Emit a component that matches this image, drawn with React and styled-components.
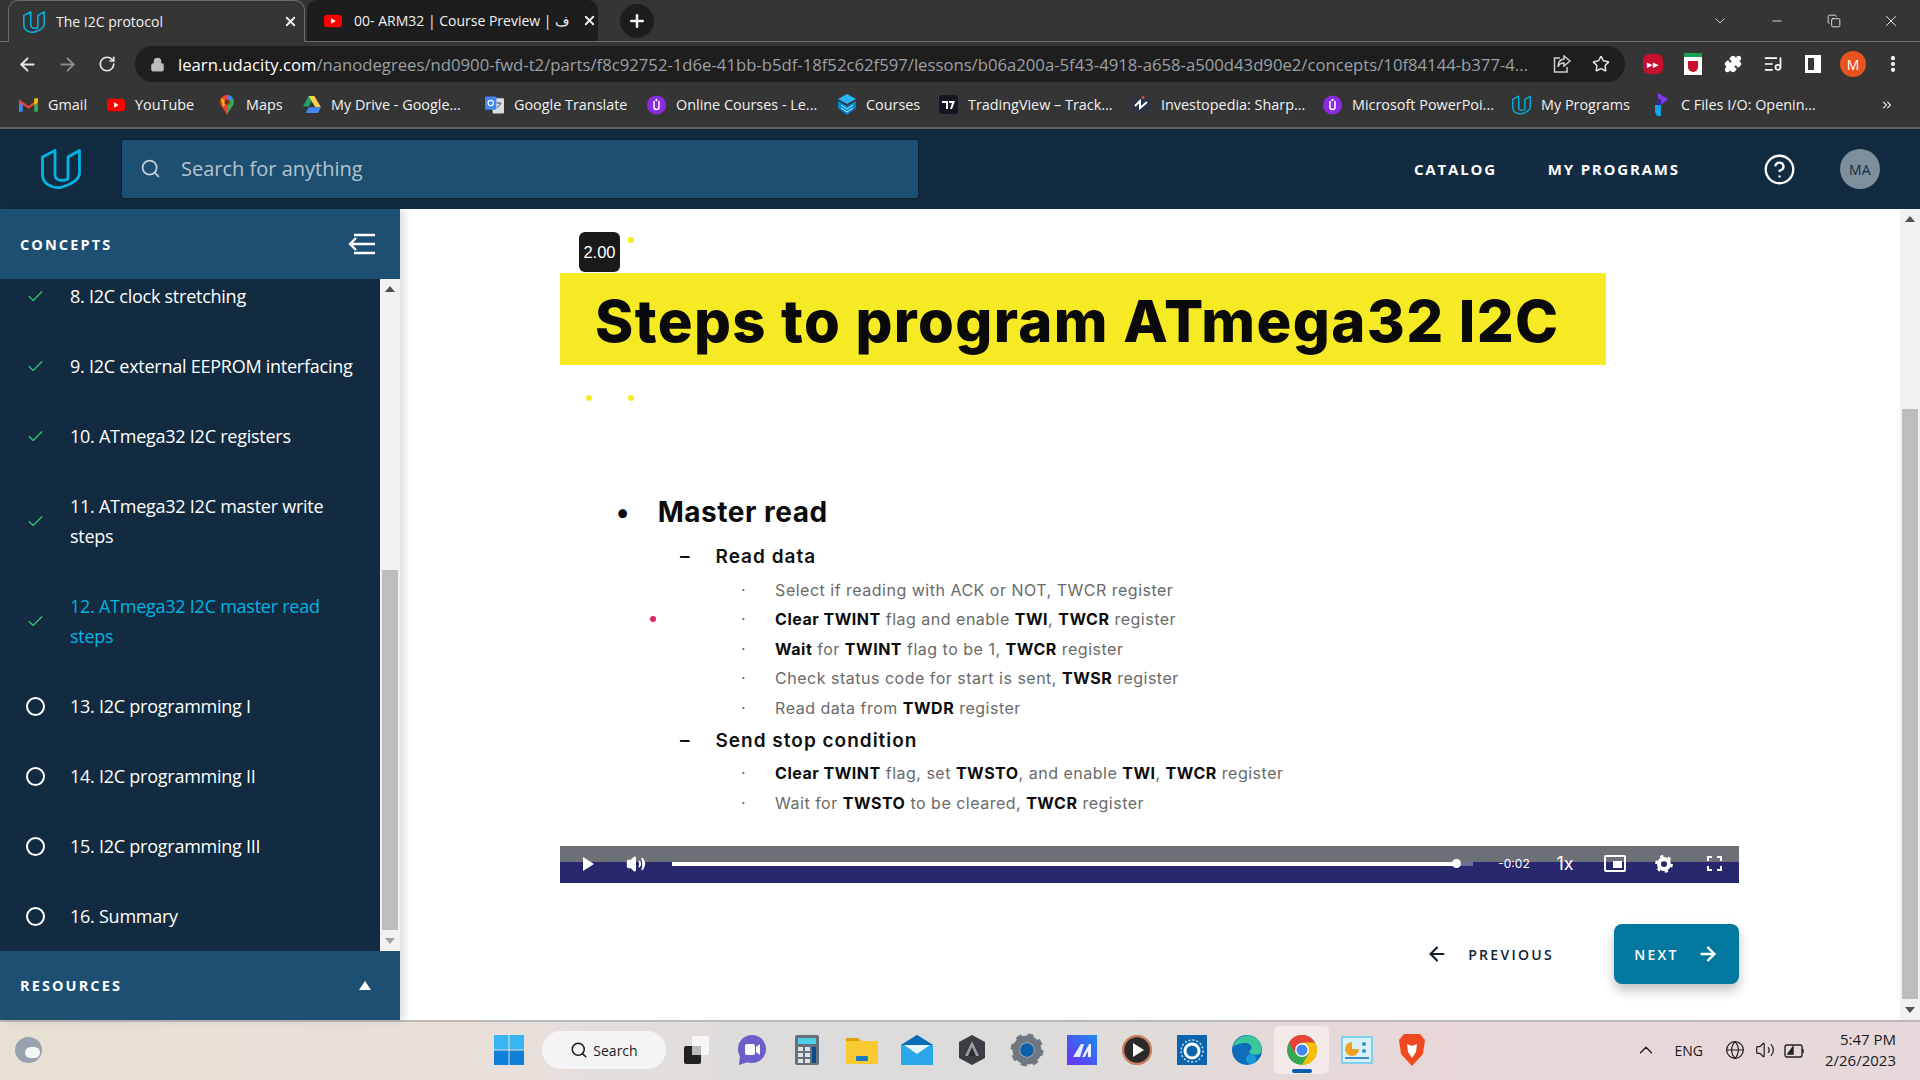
import React from "react";
import styled, { createGlobalStyle } from "styled-components";
import {
  ArrowLeft, ArrowRight, RotateCw, Lock, Star, Puzzle, Search, Check, X, Plus,
  ChevronDown, ChevronUp, Minus, Volume2, CircleHelp, Globe, ListMusic,
  EllipsisVertical, Copy, ChevronsRight,
} from "lucide-react";

const Global = createGlobalStyle`
  html, body { margin: 0; padding: 0; height: 100%; overflow: hidden; }
  body { font-family: "Open Sans", "Liberation Sans", sans-serif; }
  * { box-sizing: border-box; }
`;

const Udacity = ({ size = 20, color = "#02b3e4" }) => (
  <svg width={size} height={size} viewBox="0 0 40 40" fill="none" stroke={color} strokeWidth="2.8" strokeLinejoin="round">
    <path d="M1.5 8 L14 1.5 V26 C14 31 20 33 27 30 V8 L38.5 1.5 V24 C38.5 30 33 33 27 36 L20 38.5 C10 39.5 1.5 34 1.5 26 Z" />
  </svg>
);
const Yt = ({ size = 18 }) => (
  <svg width={size} height={size} viewBox="0 0 20 20">
    <rect x="0" y="3" width="20" height="14" rx="4" fill="#f00" />
    <path d="M8 7 L13 10 L8 13 Z" fill="#fff" />
  </svg>
);
const GmailIcon = () => (
  <svg width="19" height="16" viewBox="0 0 20 16">
    <path d="M0 3 V15 H4 V6 Z" fill="#4285f4" />
    <path d="M20 3 V15 H16 V6 Z" fill="#34a853" />
    <path d="M0 2 L10 9 L20 2 V5 L10 12 L0 5 Z" fill="#ea4335" />
    <path d="M16 1 L20 1 V5 L16 8 Z" fill="#fbbc04" />
  </svg>
);
const MapsIcon = () => (
  <svg width="14" height="20" viewBox="0 0 14 20">
    <path d="M7 0 C3 0 0 3 0 7 C0 11 5 15 7 20 Z" fill="#ea4335" />
    <path d="M7 0 C11 0 14 3 14 7 C14 11 9 15 7 20 Z" fill="#34a853" />
    <path d="M1 3 L7 7 L3 12 Z" fill="#fbbc04" />
    <path d="M7 0 C10 0 12 1 13 4 L7 7 Z" fill="#4285f4" />
    <circle cx="7" cy="7" r="2.6" fill="#7a2a1f" />
  </svg>
);
const DriveIcon = () => (
  <svg width="19" height="17" viewBox="0 0 20 18">
    <path d="M7 0 H13 L7 11 H1 Z" fill="#1fa463" />
    <path d="M13 0 L20 12 H14 L7 0 Z" fill="#ffd04b" />
    <path d="M4 18 L7 12 H20 L17 18 Z" fill="#4285f4" />
  </svg>
);
const TranslateIcon = () => (
  <svg width="20" height="20" viewBox="0 0 20 20">
    <rect x="8" y="3" width="12" height="16" rx="1" fill="#dadce0" />
    <path d="M12 8 h5 M14.5 7 v1 M13 13 l4 -5" stroke="#555" strokeWidth="1" fill="none" />
    <rect x="0" y="1" width="12" height="14" rx="1" fill="#4285f4" />
    <circle cx="6" cy="8" r="2.8" fill="none" stroke="#fff" strokeWidth="1.2" />
  </svg>
);
const PurpleU = () => (
  <svg width="19" height="20" viewBox="0 0 19 20">
    <circle cx="9.5" cy="10" r="9.5" fill="#8a2be2" />
    <path d="M7 6 V12.5 C7 15 12 15 12 12.5 V6" fill="none" stroke="#fff" strokeWidth="1.5" />
    <circle cx="9.5" cy="5" r="1.2" fill="#fff" />
  </svg>
);
const CoursesIcon = () => (
  <svg width="18" height="21" viewBox="0 0 18 21">
    <path d="M9 0 L18 5 L9 10 L0 5 Z" fill="#29b6f6" />
    <path d="M0 7 L9 12 L18 7 V14 L9 21 L0 14 Z" fill="#0288d1" />
    <path d="M3 11 L9 15 L15 11 M3 14 L9 18 L15 14" stroke="#b3e5fc" fill="none" />
  </svg>
);
const TvIcon = () => (
  <svg width="19" height="19" viewBox="0 0 19 19">
    <rect width="19" height="19" rx="3" fill="#131722" />
    <path d="M3 6 H9 V14 H7 V8 H3 Z M10 6 H16 L13 14 H11 L13 8 H10 Z" fill="#fff" />
  </svg>
);
const InvestIcon = () => (
  <svg width="19" height="21" viewBox="0 0 19 21">
    <circle cx="9.5" cy="10.5" r="9.5" fill="#2b3346" />
    <path d="M3 12 L8 7 V14 L15 8" stroke="#fff" strokeWidth="2" fill="none" />
    <circle cx="11" cy="3.5" r="1.4" fill="#e5483d" />
  </svg>
);
const CFilesIcon = () => (
  <svg width="13" height="23" viewBox="0 0 13 23">
    <path d="M3 0 L13 6 L6 12 V7 L3 5 Z" fill="#7c3aed" />
    <path d="M0 12 H6 V23 H2 L0 19 Z" fill="#0ea5e9" />
    <path d="M3 7 L7 9 L3 13 Z" fill="#3b1fd1" />
  </svg>
);

const bookmarks = [
  { w: 87, icon: <GmailIcon />, label: "Gmail" },
  { w: 111, icon: <Yt />, label: "YouTube" },
  { w: 85, icon: <MapsIcon />, label: "Maps" },
  { w: 183, icon: <DriveIcon />, label: "My Drive - Google..." },
  { w: 162, icon: <TranslateIcon />, label: "Google Translate" },
  { w: 190, icon: <PurpleU />, label: "Online Courses - Le..." },
  { w: 102, icon: <CoursesIcon />, label: "Courses" },
  { w: 193, icon: <TvIcon />, label: "TradingView – Track..." },
  { w: 191, icon: <InvestIcon />, label: "Investopedia: Sharp..." },
  { w: 189, icon: <PurpleU />, label: "Microsoft PowerPoi..." },
  { w: 140, icon: <Udacity size={20} />, label: "My Programs" },
  { w: 200, icon: <CFilesIcon />, label: "C Files I/O: Openin..." },
];

const concepts = [
  { n: "8. I2C clock stretching", done: true },
  { n: "9. I2C external EEPROM interfacing", done: true },
  { n: "10. ATmega32 I2C registers", done: true },
  { n: "11. ATmega32 I2C master write steps", done: true, tall: true },
  { n: "12. ATmega32 I2C master read steps", done: true, tall: true, active: true },
  { n: "13. I2C programming I" },
  { n: "14. I2C programming II" },
  { n: "15. I2C programming III" },
  { n: "16. Summary" },
];

// chrome parts
const Page = styled.div`
  width: 1920px;
  height: 1080px;
  display: flex;
  flex-direction: column;
  overflow: hidden;
  background: #fff;
`;
const Chrome = styled.div`
  height: 129px;
  flex: none;
  background: #353535;
  border-bottom: 2px solid #5f6368;
  display: flex;
  flex-direction: column;
`;
const TabBar = styled.div`
  height: 42px;
  display: flex;
  align-items: stretch;
  padding-left: 8px;
  color: #f1f1f1;
  font-size: 14px;
  border-bottom: 1px solid #6b6b6b;
`;
const Tab = styled.div`
  width: ${(p) => (p.$active ? 297 : 291)}px;
  margin-right: 2px;
  display: flex;
  align-items: center;
  gap: ${(p) => (p.$active ? 11 : 12)}px;
  padding: 0 ${(p) => (p.$active ? 6 : 1)}px 0 ${(p) => (p.$active ? 14 : 17)}px;
  white-space: nowrap;
  overflow: hidden;
  background: ${(p) => (p.$active ? "#353535" : "#1d1d1d")};
  border: ${(p) => (p.$active ? "1px solid #6b6b6b" : "none")};
  border-bottom: none;
  border-radius: 10px 10px 0 0;
  margin-bottom: ${(p) => (p.$active ? "-1px" : "0")};
  svg { flex: none; }
`;
const TabTitle = styled.span`
  flex: 1;
  min-width: 0;
`;
const NewTab = styled.div`
  width: 34px;
  height: 34px;
  margin: 4px 0 0 20px;
  border-radius: 50%;
  background: #1d1d1d;
  display: flex;
  align-items: center;
  justify-content: center;
`;
const WindowControls = styled.div`
  margin-left: auto;
  display: flex;
  align-items: center;
  color: #f0f0f0;
`;
const WinBtn = styled.div`
  width: 57px;
  display: flex;
  justify-content: center;
  position: relative;
  left: -1px;
`;
const ToolBar = styled.div`
  height: 44px;
  display: flex;
  align-items: center;
  color: #e8e8e8;
  padding-left: 7px;
`;
const NavIcon = styled.div`
  width: 40px;
  display: flex;
  justify-content: center;
  color: ${(p) => p.$color || "#e8e8e8"};
`;
const Omnibox = styled.div`
  width: 1490px;
  height: 36px;
  margin-left: 8px;
  border-radius: 18px;
  background: #1e1e1e;
  display: flex;
  align-items: center;
  padding-left: 15px;
  gap: 13px;
  font-size: 16.7px;
  color: #9aa0a6;
  white-space: nowrap;
`;
const Url = styled.div`
  width: 1362px;
  flex: none;
  b { font-weight: 400; color: #fff; }
`;
const OmniIcon = styled.div`
  display: flex;
  margin-left: ${(p) => p.$ml}px;
`;
const Extensions = styled.div`
  display: flex;
  align-items: center;
  margin-left: 8px;
`;
const ExtBtn = styled.div`
  width: 40px;
  display: flex;
  justify-content: center;
  align-items: center;
`;
const RedExt = styled.div`
  width: 20px;
  height: 20px;
  border-radius: 6px;
  background: #c8102e;
  color: #fff;
  font-size: 11px;
  line-height: 20px;
  text-align: center;
`;
const ShieldExt = styled.div`
  width: 18px;
  height: 22px;
  background: #fff;
  border-top: 4px solid #1d9e57;
  display: flex;
  align-items: center;
  justify-content: center;
  &::after {
    content: "";
    width: 10px;
    height: 11px;
    background: #c8102e;
    border-radius: 0 0 5px 5px;
  }
`;
const PanelExt = styled.div`
  width: 16px;
  height: 18px;
  border: 3px solid #fff;
  border-right-width: 7px;
`;
const Avatar = styled.div`
  width: ${(p) => p.$size}px;
  height: ${(p) => p.$size}px;
  margin-left: ${(p) => p.$ml || 0}px;
  border-radius: 50%;
  background: ${(p) => p.$bg};
  color: ${(p) => p.$fg || "#fff"};
  font-size: ${(p) => p.$font}px;
  display: flex;
  align-items: center;
  justify-content: center;
  flex: none;
`;
const BookmarkBar = styled.div`
  height: 39px;
  display: flex;
  align-items: center;
  padding: 0 0 2px 19px;
  color: #f1f1f1;
  font-size: 14.4px;
`;
const Bookmark = styled.div`
  width: ${(p) => p.$w}px;
  display: flex;
  align-items: center;
  gap: 10px;
  white-space: nowrap;
`;
const BookmarkIcon = styled.div`
  width: 19px;
  display: flex;
  justify-content: center;
`;
const More = styled.div`
  margin-left: 28px;
  color: #e8e8e8;
  display: flex;
`;

// udacity nav
const TopNav = styled.header`
  height: 80px;
  flex: none;
  background: #122b40;
  display: flex;
  align-items: center;
  color: #fff;
`;
const LogoSlot = styled.div`
  width: 121px;
  display: flex;
  justify-content: center;
`;
const SearchBox = styled.div`
  width: 798px;
  height: 60px;
  border-radius: 3px;
  background: #1c4f72;
  border: 1px solid #0e2233;
  display: flex;
  align-items: center;
  gap: 20px;
  padding: 0 0 2px 18px;
  font-size: 20px;
  color: #b7c3cc;
`;
const NavLink = styled.div`
  font-size: 15px;
  font-weight: 700;
  letter-spacing: 1.8px;
  margin-left: ${(p) => p.$ml}px;
`;
const HelpSlot = styled.div`
  margin: 0 0 0 83px;
  display: flex;
`;

// body
const Body = styled.div`
  flex: 1;
  min-height: 0;
  display: flex;
`;
const Sidebar = styled.aside`
  width: 400px;
  flex: none;
  display: flex;
  flex-direction: column;
  background: #122b40;
  box-shadow: 4px 0 8px rgba(0, 0, 0, 0.14);
  position: relative;
`;
const SideHead = styled.div`
  height: ${(p) => p.$h}px;
  flex: none;
  background: #1c4f72;
  display: flex;
  align-items: center;
  justify-content: space-between;
  padding: 0 24px 0 20px;
  color: #fff;
  font-size: 14.5px;
  font-weight: 700;
  letter-spacing: 2.1px;
`;
const ListArea = styled.div`
  flex: 1;
  min-height: 0;
  display: flex;
  overflow: hidden;
`;
const List = styled.div`
  flex: 1;
  margin-top: -18px;
`;
const Item = styled.div`
  height: ${(p) => (p.$tall ? 100 : 70)}px;
  display: flex;
  align-items: center;
  padding-left: 26px;
  gap: 25px;
  color: ${(p) => (p.$active ? "#02b3e4" : "#fff")};
  font-size: 18px;
  letter-spacing: -0.25px;
  line-height: 30px;
`;
const ItemMark = styled.div`
  width: 19px;
  flex: none;
  display: flex;
  justify-content: center;
`;
const Ring = styled.div`
  width: 19px;
  height: 19px;
  border-radius: 50%;
  border: 2px solid #fff;
`;
const ItemText = styled.div`
  width: 290px;
`;
const ScrollBar = styled.div`
  width: ${(p) => p.$w}px;
  flex: none;
  background: #f1f1f1;
  display: flex;
  flex-direction: column;
  align-items: stretch;
`;
const ScrollArrow = styled.div`
  height: 20px;
  flex: none;
  margin-top: ${(p) => (p.$up ? 0 : "auto")};
  display: flex;
  align-items: center;
  justify-content: center;
  &::after {
    content: "";
    border-left: 5px solid transparent;
    border-right: 5px solid transparent;
    border-${(p) => (p.$up ? "bottom" : "top")}: 6px solid ${(p) => p.$color || "#505050"};
  }
`;
const ScrollThumb = styled.div`
  flex: 0 0 ${(p) => p.$h}px;
  margin: ${(p) => p.$top}px 2px 0;
  background: #bdbdbd;
`;
const Tri = styled.div`
  border-left: 6px solid transparent;
  border-right: 6px solid transparent;
  border-bottom: 9px solid #fff;
  margin-right: 5px;
`;
const Main = styled.main`
  flex: 1;
  min-width: 0;
  display: flex;
`;
const Content = styled.div`
  flex: 1;
  min-width: 0;
  padding: 64px 0 0 160px;
`;

// video slide
const Video = styled.div`
  width: 1179px;
  height: 610px;
  display: flex;
  flex-direction: column;
  position: relative;
  font-family: Inter, "Open Sans", sans-serif;
`;
const SpeedBadge = styled.div`
  position: absolute;
  left: 19px;
  top: -41px;
  width: 41px;
  height: 40px;
  border-radius: 6px;
  background: #1a1a1a;
  color: #fff;
  font-family: "Liberation Sans", sans-serif;
  font-size: 16.5px;
  display: flex;
  align-items: center;
  justify-content: center;
`;
const Dot = styled.i`
  position: absolute;
  left: ${(p) => p.$x}px;
  top: ${(p) => p.$y}px;
  width: 6px;
  height: 6px;
  border-radius: 50%;
  background: ${(p) => p.$c};
`;
const Banner = styled.div`
  width: 1046px;
  height: 92px;
  flex: none;
  background: #f6ea24;
  display: flex;
  align-items: center;
  padding: 3px 0 0 35px;
  color: #0a0a0a;
  font-size: 58px;
  font-weight: 800;
  letter-spacing: 1.4px;
  white-space: nowrap;
`;
const Slide = styled.div`
  flex: 1;
  padding: 128px 0 0 62px;
  white-space: nowrap;
`;
const LevelOne = styled.div`
  display: flex;
  gap: 28px;
  align-items: center;
  height: 38px;
  margin-left: -6px;
  font-size: 28px;
  font-weight: 700;
  letter-spacing: 0.5px;
  color: #0b0b0b;
`;
const LevelTwo = styled.div`
  display: flex;
  gap: 25px;
  align-items: center;
  height: 37px;
  margin: ${(p) => p.$mt}px 0 0 58px;
  font-size: 19px;
  font-weight: 600;
  letter-spacing: 1px;
  color: #111;
`;
const LevelThree = styled.div`
  display: flex;
  gap: 29px;
  align-items: center;
  height: 29.5px;
  margin-left: 119px;
  font-size: 16px;
  letter-spacing: 0.5px;
  color: #6a6a6a;
  b { color: #0c0c0c; font-weight: 700; }
`;
const Controls = styled.div`
  height: 37px;
  flex: none;
  display: flex;
  align-items: center;
  padding-bottom: 2px;
  color: #fff;
  background: linear-gradient(#6b7177 0, #6b7177 16px, #27286e 16px);
`;
const Ctl = styled.div`
  display: flex;
  justify-content: center;
  width: ${(p) => p.$w}px;
  margin-left: ${(p) => p.$ml || 0}px;
  font-size: ${(p) => p.$font || 13}px;
`;
const PlayGlyph = styled.div`
  border-left: 11px solid #fff;
  border-top: 7px solid transparent;
  border-bottom: 7px solid transparent;
`;
const Seek = styled.div`
  width: 801px;
  height: 4px;
  margin-left: 17px;
  background: #6b7099;
  position: relative;
`;
const SeekFill = styled.div`
  width: 98%;
  height: 100%;
  background: #fff;
`;
const SeekKnob = styled.div`
  position: absolute;
  left: 780px;
  top: -3px;
  width: 9px;
  height: 9px;
  border-radius: 50%;
  background: #fff;
`;
const Pip = styled.div`
  width: 22px;
  height: 17px;
  border: 2px solid #fff;
  border-radius: 2px;
  display: flex;
  justify-content: flex-end;
  align-items: flex-end;
  padding: 2px;
  &::after {
    content: "";
    width: 9px;
    height: 7px;
    background: #fff;
  }
`;
const Pager = styled.div`
  width: 1179px;
  display: flex;
  justify-content: flex-end;
  align-items: center;
  margin-top: 41px;
  color: #0f2233;
  font-size: 14px;
  font-weight: 600;
  letter-spacing: 2.3px;
`;
const Previous = styled.div`
  display: flex;
  align-items: center;
  gap: 20px;
  margin-right: 60px;
`;
const NextBtn = styled.div`
  width: 125px;
  height: 60px;
  border-radius: 8px;
  background: #02789e;
  color: #fff;
  display: flex;
  align-items: center;
  justify-content: center;
  gap: 18px;
  box-shadow: 0 6px 12px rgba(0, 0, 0, 0.25);
`;

// taskbar
const Taskbar = styled.footer`
  height: 60px;
  flex: none;
  border-top: 2px solid #b9b9b9;
  padding-bottom: 2px;
  background: linear-gradient(90deg, #e6e1d3 0%, #e9e0da 25%, #dcdcdc 42%, #dddcda 55%, #e9d7d8 75%, #e6d8da 100%);
  display: flex;
  align-items: center;
  color: #1a1a1a;
`;
const Weather = styled.div`
  width: 27px;
  height: 26px;
  margin-left: 15px;
  border-radius: 50%;
  background: #97a2ae;
  display: flex;
  align-items: flex-end;
  justify-content: flex-end;
  padding: 0 2px 5px 0;
  &::after {
    content: "";
    width: 15px;
    height: 11px;
    border-radius: 6px;
    background: #f5f5f5;
  }
`;
const StartGroup = styled.div`
  margin-left: 442px;
  display: flex;
  align-items: center;
`;
const TaskSlot = styled.div`
  width: ${(p) => p.$w || 55}px;
  height: 48px;
  border-radius: 5px;
  display: flex;
  align-items: center;
  justify-content: center;
  position: relative;
  background: ${(p) => (p.$on ? "#f3e9e9" : "transparent")};
  &::after {
    content: "";
    display: ${(p) => (p.$on ? "block" : "none")};
    position: absolute;
    bottom: 1px;
    width: 20px;
    height: 4px;
    border-radius: 2px;
    background: #0a5db0;
  }
`;
const SearchPill = styled.div`
  width: 124px;
  height: 38px;
  margin: 0 3px 0 9px;
  border-radius: 19px;
  background: #f4f4f4;
  display: flex;
  align-items: center;
  justify-content: center;
  gap: 5px;
  font-size: 14px;
`;
const Tray = styled.div`
  margin-left: auto;
  display: flex;
  align-items: center;
  padding-right: 24px;
  font-size: 14px;
`;
const TrayItem = styled.div`
  display: flex;
  margin-left: ${(p) => p.$ml}px;
`;
const Clock = styled.div`
  margin-left: 19px;
  text-align: right;
  line-height: 21px;
  font-size: 15px;
`;

const WinLogo = () => (
  <svg width="30" height="30" viewBox="0 0 30 30">
    <path d="M0 0 H14.5 V14.5 H0 Z" fill="#39b5f3" />
    <path d="M15.5 0 H30 V14.5 H15.5 Z" fill="#39b5f3" />
    <path d="M0 15.5 H14.5 V30 H0 Z" fill="#0f7fd8" />
    <path d="M15.5 15.5 H30 V30 H15.5 Z" fill="#0f7fd8" />
  </svg>
);
const TaskView = () => (
  <svg width="26" height="28" viewBox="0 0 26 28">
    <rect x="8" y="0" width="17" height="19" rx="2" fill="#f7f7f7" />
    <rect x="0" y="10" width="17" height="18" rx="2" fill="#222" />
    <rect x="8" y="10" width="9" height="9" fill="#bbb" />
  </svg>
);
const Meet = () => (
  <svg width="28" height="30" viewBox="0 0 28 30">
    <circle cx="14" cy="14" r="14" fill="#6a5fc8" />
    <path d="M2 20 L1 30 L10 27 Z" fill="#6a5fc8" />
    <rect x="7" y="9" width="10" height="11" rx="2" fill="#fff" />
    <path d="M18 12 L22 9 V20 L18 17 Z" fill="#fff" />
  </svg>
);
const Calc = () => (
  <svg width="24" height="30" viewBox="0 0 24 30">
    <rect width="24" height="30" rx="2" fill="#66707a" />
    <rect x="3" y="3" width="18" height="6" fill="#4dd0e8" />
    <rect x="3" y="12" width="5" height="4" fill="#dfe3e6" />
    <rect x="10" y="12" width="5" height="4" fill="#dfe3e6" />
    <rect x="3" y="18" width="5" height="4" fill="#dfe3e6" />
    <rect x="10" y="18" width="5" height="4" fill="#dfe3e6" />
    <rect x="3" y="24" width="5" height="4" fill="#dfe3e6" />
    <rect x="10" y="24" width="5" height="4" fill="#dfe3e6" />
    <rect x="17" y="12" width="4" height="16" fill="#0d4a8a" />
  </svg>
);
const Folder = () => (
  <svg width="32" height="28" viewBox="0 0 32 28">
    <path d="M0 2 H12 L15 5 H32 V28 H0 Z" fill="#f9c934" />
    <path d="M0 2 H12 L15 5 H0 Z" fill="#e2a008" />
    <rect x="10" y="20" width="12" height="5" rx="1" fill="#0f7cc4" />
  </svg>
);
const Mail = () => (
  <svg width="32" height="30" viewBox="0 0 32 30">
    <path d="M0 10 L16 0 L32 10 V30 H0 Z" fill="#29a7e8" />
    <path d="M0 10 L16 0 L32 10 Z" fill="#0a6cb8" />
    <path d="M3 10 H29 L16 19 Z" fill="#e8f3fa" />
  </svg>
);
const Hex = () => (
  <svg width="28" height="30" viewBox="0 0 28 30">
    <path d="M14 0 L27 7 V23 L14 30 L1 23 V7 Z" fill="#3a3d42" />
    <path d="M14 6 L21 21 H7 Z" fill="#9aa0a6" />
    <path d="M14 12 L18 21 H10 Z" fill="#2a2d31" />
  </svg>
);
const GearApp = () => (
  <svg width="34" height="34" viewBox="0 0 34 34">
    <circle cx="17" cy="17" r="11" fill="none" stroke="#6f7780" strokeWidth="7" />
    <circle cx="17" cy="17" r="15" fill="none" stroke="#6f7780" strokeWidth="3" strokeDasharray="6 5.8" />
    <circle cx="17" cy="17" r="7" fill="#0f5fa8" />
  </svg>
);
const MApp = () => (
  <svg width="30" height="30" viewBox="0 0 30 30">
    <defs>
      <linearGradient id="mg" x1="0" y1="1" x2="1" y2="0">
        <stop offset="0" stopColor="#6d2ff5" />
        <stop offset="1" stopColor="#1b8bf0" />
      </linearGradient>
    </defs>
    <rect width="30" height="30" fill="url(#mg)" />
    <path d="M6 22 L14 9 H17 L13 22 Z M15 22 L22 9 H24 V22 H21 V16 L18 22 Z" fill="#e8edff" />
  </svg>
);
const Player = () => (
  <svg width="30" height="30" viewBox="0 0 30 30">
    <circle cx="15" cy="15" r="14" fill="#2a2a2a" stroke="#c8815c" strokeWidth="2.4" />
    <path d="M11 8 L22 15 L11 22 Z" fill="#fff" />
  </svg>
);
const BlueGauge = () => (
  <svg width="30" height="30" viewBox="0 0 30 30">
    <rect width="30" height="30" fill="#0a63ad" />
    <circle cx="15" cy="16" r="7" fill="none" stroke="#fff" strokeWidth="3" />
    <circle cx="15" cy="16" r="11" fill="none" stroke="#cfe6f7" strokeWidth="1.4" strokeDasharray="2 2" />
  </svg>
);
const Edge = () => (
  <svg width="30" height="30" viewBox="0 0 30 30">
    <circle cx="15" cy="15" r="15" fill="#0f6cbd" />
    <path d="M1 12 C4 2 14 -2 22 2 C28 5 31 12 29 18 C26 20 18 21 17 16 C22 14 19 8 14 8 C8 8 3 10 1 12 Z" fill="#37c99a" />
    <circle cx="19" cy="24" r="5" fill="#1a9ad6" />
  </svg>
);
const ChromeLogo = () => (
  <svg width="30" height="30" viewBox="0 0 30 30">
    <circle cx="15" cy="15" r="15" fill="#34a853" />
    <path d="M15 0 A15 15 0 0 1 28 7.5 L15 7.5 L8.5 19 L2 7.5 A15 15 0 0 1 15 0 Z" fill="#ea4335" />
    <path d="M28 7.5 A15 15 0 0 1 15 30 L21.5 19 L15 7.5 Z" fill="#fbbc04" />
    <circle cx="15" cy="15" r="7" fill="#fff" />
    <circle cx="15" cy="15" r="5.5" fill="#4285f4" />
  </svg>
);
const Chart = () => (
  <svg width="32" height="28" viewBox="0 0 32 28">
    <rect width="32" height="28" rx="1" fill="#7ed0ef" />
    <rect x="2" y="2" width="28" height="24" fill="#d9f1fb" />
    <path d="M11 6 A7 7 0 1 0 18 13 H11 Z" fill="#f0a020" />
    <circle cx="23" cy="8" r="2" fill="#3a8fc8" />
    <circle cx="23" cy="15" r="2" fill="#3a8fc8" />
    <rect x="4" y="21" width="24" height="2" fill="#3a8fc8" />
  </svg>
);
const Brave = () => (
  <svg width="28" height="32" viewBox="0 0 28 32">
    <path d="M6 0 H22 L27 6 L25 20 L14 32 L3 20 L1 6 Z" fill="#f1491f" />
    <path d="M9 10 L14 12 L19 10 L18 18 L14 24 L10 18 Z" fill="#fff" />
  </svg>
);
const Battery = () => (
  <svg width="22" height="18" viewBox="0 0 22 18" fill="none" stroke="#222" strokeWidth="1.4">
    <rect x="1" y="4" width="17" height="12" rx="2" />
    <path d="M19 8 V12" />
    <path d="M4 13 L9 6 V13 Z" fill="#222" />
  </svg>
);
const CollapseIcon = () => (
  <svg width="28" height="22" viewBox="0 0 28 22" fill="none" stroke="#fff" strokeWidth="2.4">
    <path d="M6 2 H27 M2 11 H27 M6 20 H27 M8 5 L2 11 L8 17" />
  </svg>
);
const FullscreenIcon = () => (
  <svg width="15" height="15" viewBox="0 0 15 15" fill="none" stroke="#fff" strokeWidth="2">
    <path d="M1 5 V1 H5 M10 1 H14 V5 M14 10 V14 H10 M5 14 H1 V10" />
  </svg>
);
const ShareIcon = () => (
  <svg width="20" height="20" viewBox="0 0 20 20" fill="none" stroke="#d0d0d0" strokeWidth="1.5">
    <path d="M8 4 H2.5 V18 H15 V13" />
    <path d="M12 2 L18 7 L12 12 V9 C9 9 7 10 6 13 C6 8 8 5.5 12 5 Z" />
  </svg>
);
const GearIcon = () => (
  <svg width="18" height="18" viewBox="0 0 18 18" fill="none" stroke="#fff">
    <circle cx="9" cy="9" r="5" strokeWidth="4" />
    <circle cx="9" cy="9" r="7.6" strokeWidth="2.6" strokeDasharray="3.2 4.75" />
  </svg>
);

export default function App() {
  return (
    <Page>
      <Global />
      <Chrome>
        <TabBar>
          <Tab $active>
            <Udacity size={22} />
            <TabTitle>The I2C protocol</TabTitle>
            <X size={15} strokeWidth={3} />
          </Tab>
          <Tab>
            <Yt size={18} />
            <TabTitle>00- ARM32 | Course Preview | ف</TabTitle>
            <X size={15} strokeWidth={3} />
          </Tab>
          <NewTab><Plus size={20} strokeWidth={3} /></NewTab>
          <WindowControls>
            <WinBtn><ChevronDown size={16} strokeWidth={1.2} /></WinBtn>
            <WinBtn><Minus size={14} strokeWidth={1.5} /></WinBtn>
            <WinBtn><Copy size={14} strokeWidth={1.5} /></WinBtn>
            <WinBtn><X size={18} strokeWidth={1.3} /></WinBtn>
          </WindowControls>
        </TabBar>
        <ToolBar>
          <NavIcon><ArrowLeft size={21} strokeWidth={2.2} /></NavIcon>
          <NavIcon $color="#8a8a8a"><ArrowRight size={21} strokeWidth={2.2} /></NavIcon>
          <NavIcon><RotateCw size={18} strokeWidth={2.2} /></NavIcon>
          <Omnibox>
            <Lock size={15} fill="#bdbdbd" color="#bdbdbd" />
            <Url><b>learn.udacity.com</b>/nanodegrees/nd0900-fwd-t2/parts/f8c92752-1d6e-41bb-b5df-18f52c62f597/lessons/b06a200a-5f43-4918-a658-a500d43d90e2/concepts/10f84144-b377-4...</Url>
            <OmniIcon $ml={-1}><ShareIcon /></OmniIcon>
            <OmniIcon $ml={7}><Star size={18} color="#e8e8e8" /></OmniIcon>
          </Omnibox>
          <Extensions>
            <ExtBtn><RedExt>▸▸</RedExt></ExtBtn>
            <ExtBtn><ShieldExt /></ExtBtn>
            <ExtBtn><Puzzle size={18} fill="#fff" color="#fff" /></ExtBtn>
            <ExtBtn><ListMusic size={20} color="#fff" /></ExtBtn>
            <ExtBtn><PanelExt /></ExtBtn>
            <ExtBtn><Avatar $size={26} $bg="#e8531f" $font={14}>M</Avatar></ExtBtn>
            <ExtBtn><EllipsisVertical size={20} color="#fff" strokeWidth={3} /></ExtBtn>
          </Extensions>
        </ToolBar>
        <BookmarkBar>
          {bookmarks.map((b) => (
            <Bookmark key={b.label} $w={b.w}>
              <BookmarkIcon>{b.icon}</BookmarkIcon>
              {b.label}
            </Bookmark>
          ))}
          <More><ChevronsRight size={14} /></More>
        </BookmarkBar>
      </Chrome>

      <TopNav>
        <LogoSlot><Udacity size={40} /></LogoSlot>
        <SearchBox>
          <Search size={21} color="#c5ced5" />
          Search for anything
        </SearchBox>
        <NavLink $ml={495}>CATALOG</NavLink>
        <NavLink $ml={51}>MY PROGRAMS</NavLink>
        <HelpSlot><CircleHelp size={33} strokeWidth={1.7} /></HelpSlot>
        <Avatar $size={40} $bg="#7d8f9c" $font={14} $fg="#122b40" $ml={44}>MA</Avatar>
      </TopNav>

      <Body>
        <Sidebar>
          <SideHead $h={70}>
            CONCEPTS
            <CollapseIcon />
          </SideHead>
          <ListArea>
            <List>
              {concepts.map((c) => (
                <Item key={c.n} $tall={c.tall} $active={c.active}>
                  <ItemMark>
                    {c.done ? <Check size={25} color="#2ecc71" strokeWidth={1.5} /> : <Ring />}
                  </ItemMark>
                  <ItemText>{c.n}</ItemText>
                </Item>
              ))}
            </List>
            <ScrollBar $w={20}>
              <ScrollArrow $up />
              <ScrollThumb $h={360} $top={271} />
              <ScrollArrow $color="#a0a0a0" />
            </ScrollBar>
          </ListArea>
          <SideHead $h={69}>
            RESOURCES
            <Tri />
          </SideHead>
        </Sidebar>

        <Main>
          <Content>
            <Video>
              <SpeedBadge>2.00</SpeedBadge>
              <Dot $x={68} $y={-36} $c="#f6ea24" />
              <Dot $x={26} $y={122} $c="#f6ea24" />
              <Dot $x={68} $y={122} $c="#f6ea24" />
              <Dot $x={90} $y={343} $c="#e0245e" />
              <Banner>Steps to program ATmega32 I2C</Banner>
              <Slide>
                <LevelOne><span>•</span>Master read</LevelOne>
                <LevelTwo $mt={7}><span>–</span>Read data</LevelTwo>
                <LevelThree><span>·</span><span>Select if reading with ACK or NOT, TWCR register</span></LevelThree>
                <LevelThree><span>·</span><span><b>Clear TWINT</b> flag and enable <b>TWI</b>, <b>TWCR</b> register</span></LevelThree>
                <LevelThree><span>·</span><span><b>Wait</b> for <b>TWINT</b> flag to be 1, <b>TWCR</b> register</span></LevelThree>
                <LevelThree><span>·</span><span>Check status code for start is sent, <b>TWSR</b> register</span></LevelThree>
                <LevelThree><span>·</span><span>Read data from <b>TWDR</b> register</span></LevelThree>
                <LevelTwo $mt={-1}><span>–</span>Send stop condition</LevelTwo>
                <LevelThree><span>·</span><span><b>Clear TWINT</b> flag, set <b>TWSTO</b>, and enable <b>TWI</b>, <b>TWCR</b> register</span></LevelThree>
                <LevelThree><span>·</span><span>Wait for <b>TWSTO</b> to be cleared, <b>TWCR</b> register</span></LevelThree>
              </Slide>
              <Controls>
                <Ctl $w={56}><PlayGlyph /></Ctl>
                <Ctl $w={39}><Volume2 size={20} fill="#fff" /></Ctl>
                <Seek>
                  <SeekFill />
                  <SeekKnob />
                </Seek>
                <Ctl $w={40} $ml={21} $font={12}>-0:02</Ctl>
                <Ctl $w={30} $ml={16} $font={18}>1x</Ctl>
                <Ctl $w={30} $ml={20}><Pip /></Ctl>
                <Ctl $w={30} $ml={19}><GearIcon /></Ctl>
                <Ctl $w={30} $ml={20}><FullscreenIcon /></Ctl>
              </Controls>
            </Video>
            <Pager>
              <Previous>
                <ArrowLeft size={22} strokeWidth={2.4} />
                PREVIOUS
              </Previous>
              <NextBtn>
                NEXT
                <ArrowRight size={22} strokeWidth={2.6} />
              </NextBtn>
            </Pager>
          </Content>
          <ScrollBar $w={20}>
            <ScrollArrow $up />
            <ScrollThumb $h={590} $top={180} />
            <ScrollArrow />
          </ScrollBar>
        </Main>
      </Body>

      <Taskbar>
        <Weather />
        <StartGroup>
          <TaskSlot $w={49}><WinLogo /></TaskSlot>
          <SearchPill><Search size={18} strokeWidth={2} />Search</SearchPill>
          <TaskSlot><TaskView /></TaskSlot>
          <TaskSlot><Meet /></TaskSlot>
          <TaskSlot><Calc /></TaskSlot>
          <TaskSlot><Folder /></TaskSlot>
          <TaskSlot><Mail /></TaskSlot>
          <TaskSlot><Hex /></TaskSlot>
          <TaskSlot><GearApp /></TaskSlot>
          <TaskSlot><MApp /></TaskSlot>
          <TaskSlot><Player /></TaskSlot>
          <TaskSlot><BlueGauge /></TaskSlot>
          <TaskSlot><Edge /></TaskSlot>
          <TaskSlot $on><ChromeLogo /></TaskSlot>
          <TaskSlot><Chart /></TaskSlot>
          <TaskSlot><Brave /></TaskSlot>
        </StartGroup>
        <Tray>
          <TrayItem $ml={0}><ChevronUp size={22} strokeWidth={1.4} /></TrayItem>
          <TrayItem $ml={17}>ENG</TrayItem>
          <TrayItem $ml={22}><Globe size={20} strokeWidth={1.4} /></TrayItem>
          <TrayItem $ml={10}><Volume2 size={20} strokeWidth={1.4} /></TrayItem>
          <TrayItem $ml={9}><Battery /></TrayItem>
          <Clock>5:47 PM<br />2/26/2023</Clock>
        </Tray>
      </Taskbar>
    </Page>
  );
}
